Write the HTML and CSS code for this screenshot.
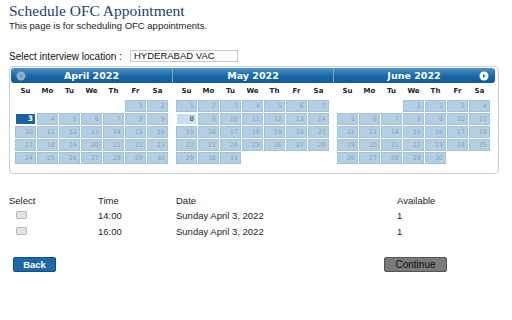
FILE: index.html
```html
<!DOCTYPE html>
<html>
<head>
<meta charset="utf-8">
<link rel="stylesheet" href="styles.css">
</head>
<body>
<div class="page">
  <h1 class="title">Schedule OFC Appointment</h1>
  <p class="subtitle">This page is for scheduling OFC appointments.</p>
  <div class="location">
    <span class="loc-label">Select interview location :</span>
    <span class="loc-input">HYDERABAD VAC</span>
  </div>
  <div class="calendar">
    <div class="cal-head">
      <div class="month-title">April 2022</div>
      <div class="month-title">May 2022</div>
      <div class="month-title">June 2022</div>
      <svg class="nav prev" width="10" height="10" viewBox="0 0 10 10"><circle cx="5" cy="5" r="4.5" fill="#8fb0c9"/><path d="M6 3 L3.5 5 L6 7 Z" fill="#6e93b0"/></svg>
      <svg class="nav next" width="10" height="10" viewBox="0 0 10 10"><circle cx="5" cy="5" r="4.5" fill="#ffffff"/><path d="M4 3 L6.5 5 L4 7 Z" fill="#1c5f97"/></svg>
    </div>
    <div class="months">
      <div class="month">
        <div class="dow">Su</div><div class="dow">Mo</div><div class="dow">Tu</div><div class="dow">We</div><div class="dow">Th</div><div class="dow">Fr</div><div class="dow">Sa</div>
        <div class="d s6">1</div><div class="d">2</div>
        <div class="d sel">3</div><div class="d">4</div><div class="d">5</div><div class="d">6</div><div class="d">7</div><div class="d">8</div><div class="d">9</div>
        <div class="d">10</div><div class="d">11</div><div class="d">12</div><div class="d">13</div><div class="d">14</div><div class="d">15</div><div class="d">16</div>
        <div class="d">17</div><div class="d">18</div><div class="d">19</div><div class="d">20</div><div class="d">21</div><div class="d">22</div><div class="d">23</div>
        <div class="d">24</div><div class="d">25</div><div class="d">26</div><div class="d">27</div><div class="d">28</div><div class="d">29</div><div class="d">30</div>
      </div>
      <div class="month">
        <div class="dow">Su</div><div class="dow">Mo</div><div class="dow">Tu</div><div class="dow">We</div><div class="dow">Th</div><div class="dow">Fr</div><div class="dow">Sa</div>
        <div class="d">1</div><div class="d">2</div><div class="d">3</div><div class="d">4</div><div class="d">5</div><div class="d">6</div><div class="d">7</div>
        <div class="d today">8</div><div class="d">9</div><div class="d">10</div><div class="d">11</div><div class="d">12</div><div class="d">13</div><div class="d">14</div>
        <div class="d">15</div><div class="d">16</div><div class="d">17</div><div class="d">18</div><div class="d">19</div><div class="d">20</div><div class="d">21</div>
        <div class="d">22</div><div class="d">23</div><div class="d">24</div><div class="d">25</div><div class="d">26</div><div class="d">27</div><div class="d">28</div>
        <div class="d">29</div><div class="d">30</div><div class="d">31</div>
      </div>
      <div class="month">
        <div class="dow">Su</div><div class="dow">Mo</div><div class="dow">Tu</div><div class="dow">We</div><div class="dow">Th</div><div class="dow">Fr</div><div class="dow">Sa</div>
        <div class="d s4">1</div><div class="d">2</div><div class="d">3</div><div class="d">4</div>
        <div class="d">5</div><div class="d">6</div><div class="d">7</div><div class="d">8</div><div class="d">9</div><div class="d">10</div><div class="d">11</div>
        <div class="d">12</div><div class="d">13</div><div class="d">14</div><div class="d">15</div><div class="d">16</div><div class="d">17</div><div class="d">18</div>
        <div class="d">19</div><div class="d">20</div><div class="d">21</div><div class="d">22</div><div class="d">23</div><div class="d">24</div><div class="d">25</div>
        <div class="d">26</div><div class="d">27</div><div class="d">28</div><div class="d">29</div><div class="d">30</div>
      </div>
    </div>
  </div>
  <div class="slots">
    <div class="row head"><span>Select</span><span>Time</span><span>Date</span><span>Available</span></div>
    <div class="row"><span><i class="cb"></i></span><span>14:00</span><span>Sunday April 3, 2022</span><span>1</span></div>
    <div class="row"><span><i class="cb"></i></span><span>16:00</span><span>Sunday April 3, 2022</span><span>1</span></div>
  </div>
  <div class="actions">
    <span class="btn back">Back</span>
    <span class="btn cont">Continue</span>
  </div>
</div>
</body>
</html>
```
FILE: styles.css
```css
html, body { margin: 0; padding: 0; background: #fff; }
.page { padding: 2px 0 0 9px; font-family: "Liberation Sans", Arial, sans-serif; color: #222; }
.title { margin: 0; font-family: "Liberation Serif", "Times New Roman", serif; font-weight: normal; font-size: 15.5px; line-height: 18px; color: #1f3b76; }
.subtitle { margin: 0; font-size: 9.5px; line-height: 11px; color: #222; }
.location { display: flex; align-items: center; margin-top: 19px; height: 12px; }
.loc-label { font-size: 10px; width: 121px; color: #111; }
.loc-input { box-sizing: border-box; width: 108px; height: 12px; border: 1px solid #c9c9c9; font-size: 9.5px; line-height: 10px; padding-left: 3px; color: #111; }
.calendar { box-sizing: border-box; width: 490px; margin-top: 4px; border: 1px solid #cfcfcf; border-radius: 4px; padding: 1px 3px 9px 1px; }
.cal-head { position: relative; display: grid; grid-template-columns: 161px 161px 161px; height: 15px; border-radius: 3px; background: linear-gradient(#4a93c9, #1c67a5 55%, #0f5a98); }
.month-title { font-family: "DejaVu Sans", Verdana, sans-serif; font-weight: bold; font-size: 9.5px; line-height: 15px; color: #fff; text-align: center; }
.month-title + .month-title { border-left: 1px solid #7fa8cc; }
.nav { position: absolute; top: 2.5px; }
.nav.prev { left: 5px; }
.nav.next { right: 6px; }
.months { display: grid; grid-template-columns: 161px 161px 161px; }
.month { display: grid; grid-template-columns: repeat(7, 1fr); grid-auto-rows: 12px; gap: 1px; padding: 0 4px 0 4px; grid-template-rows: 16px; }
.dow { font-family: "DejaVu Sans", Verdana, sans-serif; font-weight: bold; font-size: 7px; line-height: 16px; text-align: center; color: #222; }
.d { box-sizing: border-box; background: #b3cfe3; border: 1px solid #a3c1d7; font-family: "DejaVu Sans", Verdana, sans-serif; font-size: 6.5px; line-height: 10px; text-align: right; padding-right: 2px; color: #8ba3b6; }
.s6 { grid-column-start: 6; }
.s4 { grid-column-start: 4; }
.d.sel { background: #1b62a0; border-color: #fff; color: #fff; font-weight: bold; font-size: 7.5px; }
.d.today { background: #c8dff3; border-color: #fff; color: #333; font-size: 7px; }
.slots { margin-top: 19px; font-size: 9.5px; color: #222; }
.row { display: grid; grid-template-columns: 85px 78px 221px auto; align-items: center; height: 16px; padding-left: 4px; }
.row.head { height: 14px; }
.row.head span:first-child { margin-left: -4px; }
.cb { display: block; box-sizing: border-box; width: 11px; height: 8px; margin-left: 3px; border: 1px solid #b6b6b6; border-radius: 2px; background: #e3e3e3; }
.actions { display: flex; justify-content: space-between; width: 434px; margin-top: 18px; padding-left: 4px; }
.btn { box-sizing: border-box; height: 15px; font-size: 9.5px; line-height: 13px; text-align: center; border-radius: 2px; }
.back { width: 43px; background: #1d69a8; border: 1px solid #0e4f86; color: #fff; font-weight: bold; }
.cont { width: 63px; background: #7b7b7b; border: 1px solid #555; color: #111; font-size: 10px; }
```
